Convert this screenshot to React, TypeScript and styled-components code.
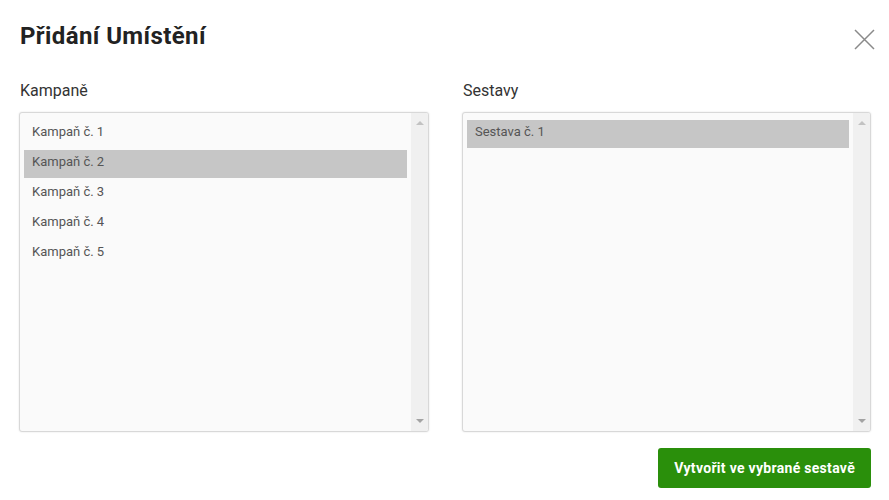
import React, { useState } from "react"
import styled, { createGlobalStyle } from "styled-components"

const Global = createGlobalStyle`
  html, body {
    margin: 0;
    padding: 0;
    background: #fff;
    font-family: Roboto, "Liberation Sans", sans-serif;
  }
`

const Modal = styled.div`
  width: 889px;
  height: 500px;
  box-sizing: border-box;
  padding: 20px 18px 0 19px;
  display: flex;
  flex-direction: column;
`

const Header = styled.div`
  display: flex;
  justify-content: space-between;
  align-items: flex-start;
  height: 60px;
`

const Title = styled.h2`
  margin: 0;
  padding-left: 1px;
  font-size: 24px;
  line-height: 32px;
  font-weight: 700;
  letter-spacing: 0.4px;
  color: #222;
`

const Close = styled.button`
  border: 0;
  background: none;
  padding: 0;
  margin-top: 9px;
  margin-right: -4px;
  width: 22px;
  height: 22px;
  cursor: pointer;
`

const Columns = styled.div`
  display: grid;
  grid-template-columns: 410px 409px;
  column-gap: 33px;
`

const Column = styled.div`
  display: flex;
  flex-direction: column;
`

const Label = styled.div`
  font-size: 16px;
  line-height: 22px;
  color: #333;
  padding-left: 1px;
  margin-bottom: 10px;
`

const Box = styled.div`
  height: 320px;
  box-sizing: border-box;
  border: 1px solid #d8d8d8;
  border-radius: 3px;
  box-shadow: 0 0 2px rgba(0, 0, 0, 0.12);
  background: #fafafa;
  display: flex;
  overflow: hidden;
`

const List = styled.ul`
  flex: 1;
  list-style: none;
  margin: 0;
  padding: 7px 4px 0 4px;
`

const Item = styled.li<{ $selected?: boolean }>`
  height: 28px;
  line-height: 24px;
  margin-bottom: 2px;
  padding-left: 8px;
  font-size: 13px;
  color: #555;
  background: ${(p) => (p.$selected ? "#c6c6c6" : "transparent")};
  cursor: default;
`

const Scrollbar = styled.div`
  width: 17px;
  background: #f0f0f0;
  display: flex;
  flex-direction: column;
  justify-content: space-between;
  align-items: center;
  padding: 8px 0 8px;
`

const Arrow = styled.div<{ $down?: boolean }>`
  width: 0;
  height: 0;
  border-left: 4px solid transparent;
  border-right: 4px solid transparent;
  ${(p) =>
    p.$down
      ? "border-top: 4px solid #a3a3a3;"
      : "border-bottom: 4px solid #c2c2c2;"}
`

const Footer = styled.div`
  display: flex;
  justify-content: flex-end;
  margin-top: 16px;
`

const Primary = styled.button`
  height: 40px;
  padding: 0 16px;
  border: 0;
  border-radius: 3px;
  background: #2a8f0b;
  color: #fff;
  font-family: Roboto, "Liberation Sans", sans-serif;
  font-size: 14px;
  font-weight: 700;
  letter-spacing: 0.3px;
  cursor: pointer;
`

type ListProps = {
  label: string
  items: string[]
  initial: number
}

const Picker = ({ label, items, initial }: ListProps) => {
  const [sel, setSel] = useState(initial)
  return (
    <Column>
      <Label>{label}</Label>
      <Box>
        <List>
          {items.map((it, i) => (
            <Item key={it} $selected={i === sel} onClick={() => setSel(i)}>
              {it}
            </Item>
          ))}
        </List>
        <Scrollbar>
          <Arrow />
          <Arrow $down />
        </Scrollbar>
      </Box>
    </Column>
  )
}

const App = () => (
  <>
    <Global />
    <Modal>
      <Header>
        <Title>Přidání Umístění</Title>
        <Close aria-label="Zavřít">
          <svg width="22" height="22" viewBox="0 0 22 22">
            <path d="M2 1 L21 20 M21 1 L2 20" stroke="#8a8a8a" strokeWidth="1.5" fill="none" />
          </svg>
        </Close>
      </Header>
      <Columns>
        <Picker
          label="Kampaně"
          items={["Kampaň č. 1", "Kampaň č. 2", "Kampaň č. 3", "Kampaň č. 4", "Kampaň č. 5"]}
          initial={1}
        />
        <Picker label="Sestavy" items={["Sestava č. 1"]} initial={0} />
      </Columns>
      <Footer>
        <Primary>Vytvořit ve vybrané sestavě</Primary>
      </Footer>
    </Modal>
  </>
)

export default App
